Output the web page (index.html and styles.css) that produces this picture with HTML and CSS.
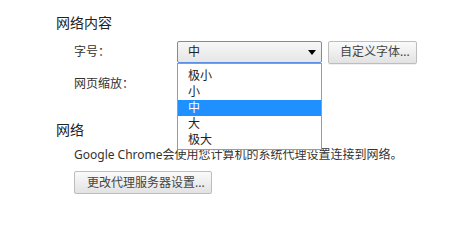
FILE: index.html
```html
<!DOCTYPE html>
<html lang="zh-CN">
<head>
<meta charset="utf-8">
<link rel="stylesheet" href="styles.css">
</head>
<body>
<div class="page">
  <h3 class="heading">网络内容</h3>
  <div class="row row-first">
    <span class="label">字号：</span>
    <div class="select-wrap">
      <div class="select">
        <span class="select-value">中</span>
        <span class="arrow"></span>
      </div>
      <ul class="options">
        <li class="option">极小</li>
        <li class="option">小</li>
        <li class="option selected">中</li>
        <li class="option">大</li>
        <li class="option">极大</li>
      </ul>
    </div>
    <button class="btn btn-fonts">自定义字体...</button>
  </div>
  <div class="row row-second">
    <span class="label">网页缩放：</span>
  </div>
  <h3 class="heading heading-net">网络</h3>
  <div class="indent">
    <p class="desc">Google Chrome会使用您计算机的系统代理设置连接到网络。</p>
    <button class="btn btn-proxy">更改代理服务器设置...</button>
  </div>
</div>
</body>
</html>
```

FILE: styles.css
```css
html, body {
  margin: 0;
  padding: 0;
  background: #ffffff;
}

body {
  font-family: "Noto Sans", "Noto Sans CJK SC", sans-serif;
  font-size: 12px;
  color: #333333;
}

.page {
  padding: 13px 0 0 56px;
}

.heading {
  margin: 0;
  font-size: 14px;
  font-weight: normal;
  line-height: 20px;
  color: #222222;
}

.heading-net {
  margin-top: 25px;
}

.row {
  display: flex;
  align-items: center;
  height: 22px;
  padding-left: 18px;
}

.row-first {
  margin-top: 8px;
}

.row-second {
  margin-top: 10px;
}

.label {
  width: 103px;
  line-height: 16px;
  color: #333333;
}

.select-wrap {
  position: relative;
  width: 145px;
  height: 22px;
}

.select {
  box-sizing: border-box;
  height: 22px;
  border: 1px solid #5b8fe8;
  border-radius: 2px;
  background: linear-gradient(#f7f7f7, #e6e6e6);
  display: flex;
  align-items: center;
  padding: 0 5px 0 10px;
}

.select-value {
  flex: 1;
  line-height: 16px;
  color: #222222;
}

.arrow {
  width: 0;
  height: 0;
  border-left: 4px solid transparent;
  border-right: 4px solid transparent;
  border-top: 5px solid #000000;
}

.options {
  position: absolute;
  top: 22px;
  left: 0;
  box-sizing: border-box;
  width: 145px;
  margin: 0;
  padding: 4px 0 1px;
  list-style: none;
  background: #ffffff;
  border: 1px solid #7f9ed6;
  z-index: 2;
}

.option {
  height: 16px;
  line-height: 16px;
  padding-left: 10px;
  color: #222222;
}

.option.selected {
  background: #1e90ff;
  color: #ffffff;
}

.btn {
  box-sizing: border-box;
  height: 23px;
  margin: 0;
  border: 1px solid #bdbdbd;
  border-radius: 2px;
  background: linear-gradient(#fafafa, #f1f1f1 40%, #e2e2e2);
  box-shadow: 0 1px 0 rgba(0, 0, 0, 0.06);
  font-family: "Noto Sans", "Noto Sans CJK SC", sans-serif;
  font-size: 12px;
  line-height: 16px;
  color: #444444;
  text-align: left;
}

.btn-fonts {
  width: 89px;
  margin-left: 6px;
  padding: 0 0 0 11px;
}

.indent {
  padding-left: 18px;
}

.desc {
  margin: 7px 0 0;
  line-height: 16px;
  color: #333333;
}

.btn-proxy {
  width: 138px;
  margin-top: 8px;
  padding: 0 0 0 12px;
}
```
